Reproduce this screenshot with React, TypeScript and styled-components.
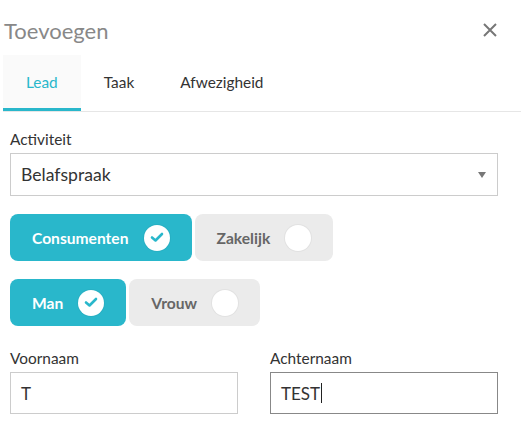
import styled, { createGlobalStyle } from "styled-components";

const GlobalStyle = createGlobalStyle`
  body {
    margin: 0;
    background: #fff;
    font-family: Lato, "Open Sans", sans-serif;
    color: #444;
  }
`;

const Modal = styled.div`
  width: 521px;
  height: 433px;
  overflow: hidden;
`;
const Header = styled.div`
  display: flex;
  align-items: center;
  justify-content: space-between;
  padding: 14px 24px 0 4px;
  height: 32px;
`;
const Title = styled.h1`
  margin: 0;
  font-size: 22px;
  font-weight: 400;
  color: #888;
`;
const CloseButton = styled.button`
  border: 0;
  background: none;
  padding: 0;
  width: 14px;
  height: 14px;
  display: flex;
  cursor: pointer;
`;
const Tabs = styled.div`
  display: flex;
  margin: 9px 0 0 3px;
  border-bottom: 1px solid #e6e6e6;
`;
const Tab = styled.div<{ $active?: boolean }>`
  height: 53px;
  padding: 0 23px;
  display: flex;
  align-items: center;
  font-size: 15.4px;
  color: ${(p) => (p.$active ? "#29b7cb" : "#333")};
  background: ${(p) => (p.$active ? "#fafafa" : "transparent")};
  border-bottom: 3px solid ${(p) => (p.$active ? "#29b7cb" : "transparent")};
`;
const Body = styled.div`
  padding: 18px 23px 0 10px;
`;
const Label = styled.div`
  font-size: 15.4px;
  color: #333;
  line-height: 18px;
  margin-bottom: 5px;
`;
const SelectBox = styled.div`
  height: 41px;
  border: 1px solid #ccc;
  display: flex;
  align-items: center;
  justify-content: space-between;
  padding: 0 11px 0 10px;
  font-size: 17.6px;
  color: #333;
`;
const Caret = styled.span`
  width: 0;
  height: 0;
  border-left: 4px solid transparent;
  border-right: 4px solid transparent;
  border-top: 6px solid #777;
`;
const ToggleRow = styled.div`
  display: flex;
  gap: 3px;
  margin-top: 18px;
`;
const Toggle = styled.div<{ $on?: boolean }>`
  height: 47px;
  display: flex;
  align-items: center;
  gap: 15px;
  padding: 0 22px;
  border-radius: 8px;
  font-size: 15.6px;
  font-weight: 700;
  color: ${(p) => (p.$on ? "#fff" : "#666")};
  background: ${(p) => (p.$on ? "#29b7cb" : "#ebebeb")};
`;
const Dot = styled.span`
  width: 26px;
  height: 26px;
  border-radius: 50%;
  background: #fff;
  display: flex;
  align-items: center;
  justify-content: center;
  box-shadow: 0 0 0 1px rgba(0, 0, 0, 0.04);
`;
const FieldRow = styled.div`
  display: grid;
  grid-template-columns: 228px 228px;
  column-gap: 32px;
  margin-top: 23px;
`;
const Input = styled.div<{ $focus?: boolean }>`
  height: 40px;
  border: 1px solid ${(p) => (p.$focus ? "#888" : "#ccc")};
  display: flex;
  align-items: center;
  padding: 0 10px;
  font-size: 17px;
  color: #333;
`;
const Cursor = styled.span`
  display: inline-block;
  width: 1px;
  height: 20px;
  background: #222;
  margin-left: 1px;
`;

const Check = () => (
  <svg width="14" height="11" viewBox="0 0 14 11">
    <path d="M2 5.5 L5.5 8.5 L12 2" fill="none" stroke="#29b7cb" strokeWidth="2.6" strokeLinecap="round" strokeLinejoin="round" />
  </svg>
);

function ToggleButton({ label, on }: { label: string; on?: boolean }) {
  return (
    <Toggle $on={on}>
      {label}
      <Dot>{on && <Check />}</Dot>
    </Toggle>
  );
}

export default function App() {
  return (
    <Modal>
      <GlobalStyle />
      <Header>
        <Title>Toevoegen</Title>
        <CloseButton>
          <svg width="14" height="14" viewBox="0 0 14 14">
            <path d="M1 1 L13 13 M13 1 L1 13" stroke="#777" strokeWidth="2" />
          </svg>
        </CloseButton>
      </Header>
      <Tabs>
        <Tab $active>Lead</Tab>
        <Tab>Taak</Tab>
        <Tab>Afwezigheid</Tab>
      </Tabs>
      <Body>
        <Label>Activiteit</Label>
        <SelectBox>
          Belafspraak
          <Caret />
        </SelectBox>
        <ToggleRow>
          <ToggleButton label="Consumenten" on />
          <ToggleButton label="Zakelijk" />
        </ToggleRow>
        <ToggleRow>
          <ToggleButton label="Man" on />
          <ToggleButton label="Vrouw" />
        </ToggleRow>
        <FieldRow>
          <div>
            <Label>Voornaam</Label>
            <Input>T</Input>
          </div>
          <div>
            <Label>Achternaam</Label>
            <Input $focus>
              TEST
              <Cursor />
            </Input>
          </div>
        </FieldRow>
      </Body>
    </Modal>
  );
}
